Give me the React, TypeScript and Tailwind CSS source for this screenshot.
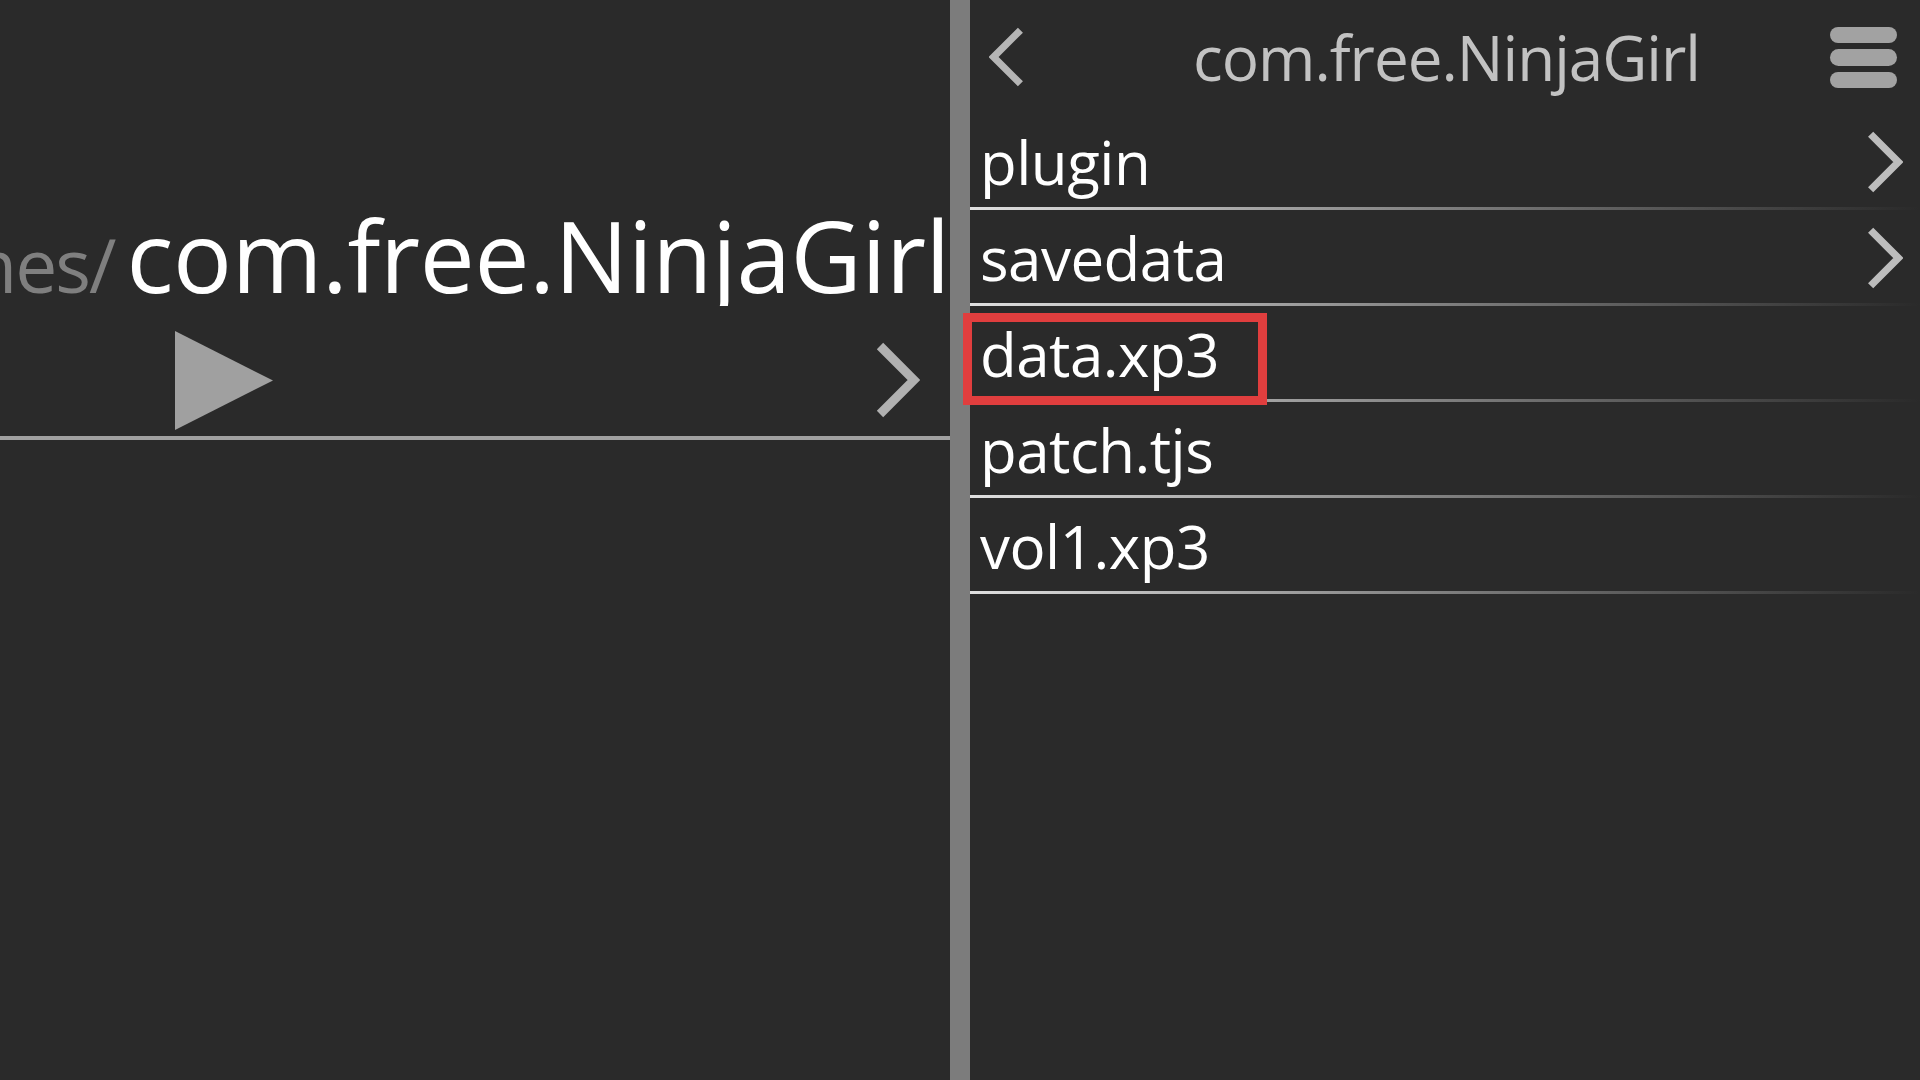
import React from 'react';

const files = [
  { name: 'plugin', dir: true },
  { name: 'savedata', dir: true },
  { name: 'data.xp3', dir: false, marked: true },
  { name: 'patch.tjs', dir: false },
  { name: 'vol1.xp3', dir: false },
];

function Chevron({ dir = 'right', className = '' }: { dir?: 'left' | 'right'; className?: string }) {
  const pts = dir === 'right' ? '4,4 38,38 4,72' : '38,4 4,38 38,72';
  return (
    <svg viewBox="0 0 42 76" className={className} fill="none">
      <polyline points={pts} stroke="currentColor" strokeWidth="9" strokeLinecap="butt" strokeLinejoin="miter" />
    </svg>
  );
}

export default function App() {
  return (
    <div
      className="relative flex h-screen w-screen overflow-hidden bg-[#2a2a2a] text-white"
      style={{ fontFamily: '"Open Sans", "Noto Sans", sans-serif' }}
    >
      {/* Left: selected game folder */}
      <div className="w-[950px] shrink-0 flex flex-col pt-[206px] overflow-hidden">
        <div className="h-[100px] flex justify-end items-baseline overflow-hidden whitespace-nowrap leading-none">
          <span className="text-[75px] text-[#7f7f7f] tracking-[-2px] mr-[12px]">/storage/emulated/0/games/</span>
          <span className="text-[98px] text-white tracking-[-0.35px]">com.free.NinjaGirl</span>
        </div>
        <div className="h-[134px] pt-[18px] flex items-center border-b-[4px] border-[#a0a0a0]">
          <svg viewBox="0 0 98 99" className="ml-[175px] w-[98px] h-[99px]">
            <polygon points="0,0 98,49.5 0,99" fill="#a0a0a0" />
          </svg>
          <Chevron className="ml-auto mr-[30px] w-[46px] h-[76px] text-[#b0b0b0]" />
        </div>
      </div>

      {/* Divider */}
      <div className="w-[20px] shrink-0 bg-[#7c7c7c]" />

      {/* Right: file list */}
      <div className="flex-1 flex flex-col">
        <div className="h-[114px] flex items-center justify-between pl-[19px] pr-[23px]">
          <Chevron dir="left" className="w-[36px] h-[60px] text-[#b5b5b5]" />
          <span className="text-[62px] leading-none text-[#c2c2c2] tracking-[-1px] pl-[38px]">com.free.NinjaGirl</span>
          <div className="w-[67px] flex flex-col gap-[6px]">
            <div className="h-[16px] rounded-full bg-[#a2a2a2]" />
            <div className="h-[17px] rounded-full bg-[#a2a2a2]" />
            <div className="h-[16px] rounded-full bg-[#a2a2a2]" />
          </div>
        </div>

        {files.map((f) => (
          <div key={f.name} className="relative h-[96px] flex flex-col">
            <div className="flex-1 pt-[3px] pl-[10px] pr-[17px] flex items-center justify-between">
              <span className="text-[60px] leading-none tracking-[-0.5px]">{f.name}</span>
              {f.dir && <Chevron className="w-[37px] h-[62px] text-[#bdbdbd]" />}
            </div>
            <div className="h-[3px] bg-linear-to-r from-[#e0e0e0] to-[#2a2a2a]" />
            {f.marked && (
              <div className="absolute left-[-7px] top-[7px] w-[304px] h-[92px] border-[9px] border-[#e03e3e]" />
            )}
          </div>
        ))}
      </div>
    </div>
  );
}
